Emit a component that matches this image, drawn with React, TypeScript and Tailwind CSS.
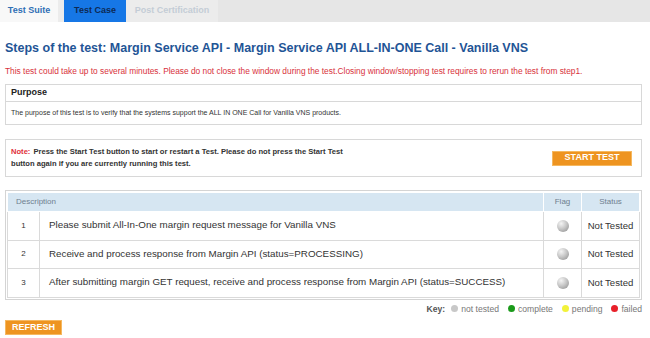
import React from "react";

const steps = [
  "Please submit All-In-One margin request message for Vanilla VNS",
  "Receive and process response from Margin API (status=PROCESSING)",
  "After submitting margin GET request, receive and process response from Margin API (status=SUCCESS)",
];

function Ball() {
  return (
    <span
      className="inline-block w-[12px] h-[12px] rounded-full"
      style={{ background: "radial-gradient(circle at 35% 30%, #f4f4f4 0%, #c8c8c8 45%, #8a8a8a 100%)" }}
    />
  );
}

export default function App() {
  return (
    <div className="w-[650px] h-[338px] bg-white overflow-hidden" style={{ fontFamily: '"Liberation Sans", Arial, sans-serif' }}>
      {/* tabs */}
      <div className="flex h-[22px] bg-[#ececec] items-stretch">
        <div className="w-[58px] bg-[#f8f8f8] text-[#2f6fb5] font-bold text-[9px] flex items-center justify-center">Test Suite</div>
        <div className="w-[6px]" />
        <div className="w-[62px] bg-[#1677e6] text-[#0d2a55] font-bold text-[9px] flex items-center justify-center">Test Case</div>
        <div className="w-[92px] text-[#c4ccd6] font-bold text-[9px] flex items-center justify-center">Post Certification</div>
        <div className="flex-1 bg-[#e6e6e6]" />
      </div>

      <div className="px-[5px] w-[637px] box-content">
        <h1 className="mt-[17px] text-[12.5px] leading-[18px] font-bold text-[#1f5596]">
          Steps of the test: Margin Service API - Margin Service API ALL-IN-ONE Call - Vanilla VNS
        </h1>
        <p className="mt-[9px] text-[8.35px] leading-[10px] text-[#d8323c] whitespace-nowrap">
          This test could take up to several minutes. Please do not close the window during the test.Closing window/stopping test requires to rerun the test from step1.
        </p>

        {/* purpose */}
        <div className="mt-[8px] border border-[#d8d8d8]">
          <div className="h-[17px] px-[5px] flex items-center text-[9px] font-bold text-[#222] border-b border-[#d8d8d8]">Purpose</div>
          <div className="h-[22px] px-[5px] flex items-center text-[7px] text-[#333]">
            The purpose of this test is to verify that the systems support the ALL IN ONE Call for Vanilla VNS products.
          </div>
        </div>

        {/* note */}
        <div className="mt-[14px] h-[38px] border border-[#d8d8d8] flex items-center justify-between pl-[5px] pr-[8px]">
          <div className="text-[7.6px] leading-[12px] font-bold text-[#333] whitespace-nowrap">
            <div className="flex gap-[3px]">
              <span className="text-[#e0303a]">Note:</span>
              <span>Press the Start Test button to start or restart a Test. Please do not press the Start Test</span>
            </div>
            <div>button again if you are currently running this test.</div>
          </div>
          <button className="w-[80px] h-[15px] mr-[1px] bg-[#ee9420] border border-[#f5b860] text-white font-bold text-[9px] flex items-center justify-center">
            START TEST
          </button>
        </div>

        {/* table */}
        <div className="mt-[13px] border border-[#d4d4d4] p-[1px]">
          <table className="w-full border-collapse text-[9.8px] text-[#333]">
            <thead>
              <tr className="h-[19px] bg-[#d6e6f2] text-[#6f7f8f] text-[8px]">
                <th colSpan={2} className="text-left font-normal pl-[8px] border border-white">Description</th>
                <th className="w-[38px] font-normal border border-white">Flag</th>
                <th className="w-[58px] font-normal border border-white">Status</th>
              </tr>
            </thead>
            <tbody>
              {steps.map((s, i) => (
                <tr key={i} className="h-[28.5px]">
                  <td className="w-[32px] text-center border border-[#dadada] text-[8px]">{i + 1}</td>
                  <td className="pl-[9px] border border-[#dadada]">{s}</td>
                  <td className="text-center border border-[#dadada] align-middle"><span className="flex justify-center"><Ball /></span></td>
                  <td className="text-center border border-[#dadada] text-[9.6px] text-[#333]">Not Tested</td>
                </tr>
              ))}
            </tbody>
          </table>
        </div>

        {/* key */}
        <div className="mt-[3px] flex justify-end items-center gap-[3px] text-[8.6px] text-[#777]">
          <span className="font-bold text-[#555]">Key:</span>
          <span className="inline-block w-[7px] h-[7px] rounded-full bg-[#c8c8c8] ml-[3px]" />
          <span>not tested</span>
          <span className="inline-block w-[7px] h-[7px] rounded-full bg-[#1a9a1a] ml-[6px]" />
          <span>complete</span>
          <span className="inline-block w-[7px] h-[7px] rounded-full bg-[#f2f23a] ml-[6px]" />
          <span>pending</span>
          <span className="inline-block w-[7px] h-[7px] rounded-full bg-[#e8202a] ml-[6px]" />
          <span>failed</span>
        </div>

        <button className="mt-[5px] w-[57px] h-[15px] bg-[#ee9420] border border-[#f5b860] text-white font-bold text-[9px] flex items-center justify-center">
          REFRESH
        </button>
      </div>
    </div>
  );
}
